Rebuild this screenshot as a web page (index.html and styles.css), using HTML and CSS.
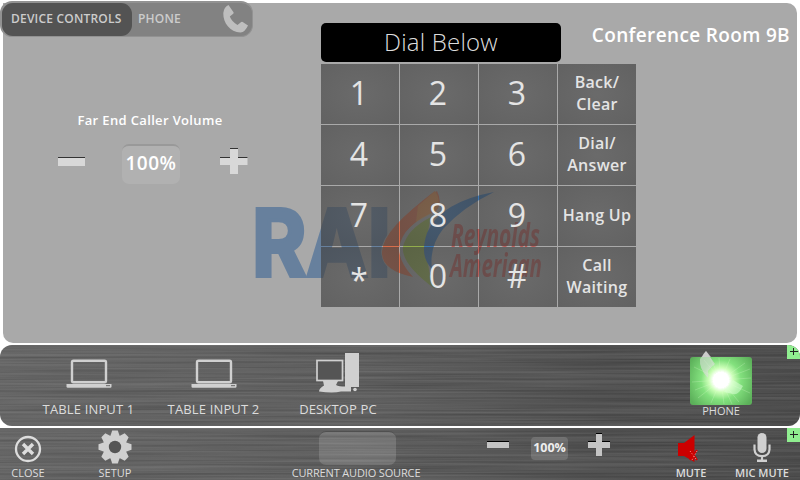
FILE: index.html
```html
<!DOCTYPE html>
<html lang="en">
<head>
<meta charset="utf-8">
<title>Conference Room 9B</title>
<link rel="stylesheet" href="styles.css">
</head>
<body>
<svg class="defs" width="0" height="0" aria-hidden="true">
  <defs>
    <filter id="brushed" x="0" y="0" width="100%" height="100%" color-interpolation-filters="sRGB">
      <feTurbulence type="fractalNoise" baseFrequency="0.004 0.42" numOctaves="3" seed="8"/>
      <feColorMatrix values="0.7 0 0 0 0.06  0.7 0 0 0 0.06  0.7 0 0 0 0.06  0 0 0 0 0.22"/>
    </filter>
    <symbol id="laptop" viewBox="0 0 46 30">
      <rect x="6" y="1.8" width="34" height="21.4" rx="1.5" fill="none" stroke="#d0d0d0" stroke-width="2.4"/>
      <path d="M.5 25h45v2.600q0 1.200-1.200 1.200H1.700Q.5 28.800.5 27.600z" fill="#d0d0d0"/>
      <path d="M40 26.700h4" stroke="#666" stroke-width="1"/>
    </symbol>
    <symbol id="handset" viewBox="0 0 26 28">
      <path d="M5.500 0 10.500 7.200Q11 8 10.200 8.700L6.800 11.500Q9 17 14.500 20L18.200 17.100Q19 16.500 19.700 17L25 20.600Q22 27.300 17.500 27.500C7 27 0 18 .3 8Q1 2 5.500 0z"/>
    </symbol>
  </defs>
</svg>

<main class="panel">
  <svg class="logo" viewBox="0 0 300 110" aria-hidden="true">
    <text class="logo-rai" x="-3" y="90" textLength="139" lengthAdjust="spacingAndGlyphs">RAI</text>
    <path fill="#e0643c" stroke="#a9a9a9" stroke-width="1.500" d="M180 4Q186 12 183 20Q139 51 139 66Q138 80 158 91Q128 86 127 66Q126 45 180 4z"/>
    <path fill="#e0643c" d="M182 5q6 12-1 20Q148 38 144 62 144 76 158 91 126 84 127 66 128 42 182 5z"/>
    <path fill="#e8a040" d="M180 5q7 10 1 20l-20 11 2-16z" opacity=".6"/>
    <path fill="#8fae3c" d="M176 31Q152 43 148 61Q146 78 180 103Q166 70 176 31z"/>
    <path fill="#2c70b8" d="M239 6Q185 16 172 47Q164 70 177 83Q174 61 188 43Q208 21 239 6z"/>
    <text class="logo-name" x="196" y="61" textLength="89" lengthAdjust="spacingAndGlyphs">Reynolds</text>
    <text class="logo-name" x="195" y="91" textLength="92" lengthAdjust="spacingAndGlyphs">American</text>
  </svg>
  <nav class="tabs">
    <span class="tab tab-active">DEVICE CONTROLS</span>
    <span class="tab">PHONE</span>
    <svg class="tab-icon" width="26" height="28"><use href="#handset"/></svg>
  </nav>
  <section class="volume">
    <h2>Far End Caller Volume</h2>
    <div class="volume-row">
      <svg width="28" height="28"><path d="M0 9h27v9H0z" fill="#d8d8d8"/><path d="M0 9.500h27" stroke="#333"/></svg>
      <output class="level">100%</output>
      <svg width="28" height="28"><path d="M0 9h10V0h8v9h9.500v8H18v9h-8v-9H0z" fill="#d8d8d8"/><path d="M0 9.500h10M10 .5h8M18 9.500h9.500" stroke="#333"/></svg>
    </div>
  </section>
  <section class="dialer">
    <header>
      <div class="display">Dial Below</div>
      <h1>Conference Room 9B</h1>
    </header>
    <div class="keypad">
      <span class="key">1</span><span class="key">2</span><span class="key">3</span><span class="key word">Back/<br>Clear</span>
      <span class="key">4</span><span class="key">5</span><span class="key">6</span><span class="key word">Dial/<br>Answer</span>
      <span class="key">7</span><span class="key">8</span><span class="key">9</span><span class="key word">Hang Up</span>
      <span class="key"><span class="star">*</span></span><span class="key">0</span><span class="key">#</span><span class="key word">Call<br>Waiting</span>
    </div>
  </section>
</main>

<section class="bar sources">
  <svg class="texture"><rect width="100%" height="100%" filter="url(#brushed)"/></svg>
  <div class="source source-1"><svg width="46" height="30"><use href="#laptop"/></svg><span>TABLE INPUT 1</span></div>
  <div class="source source-2"><svg width="46" height="30"><use href="#laptop"/></svg><span>TABLE INPUT 2</span></div>
  <div class="source source-pc">
    <svg width="44" height="40" viewBox="0 0 44 40">
      <path d="M29 0h14v34H29z" fill="#d0d0d0"/>
      <rect x="1" y="7.500" width="25.500" height="20" fill="#555" stroke="#d0d0d0" stroke-width="1.700"/>
      <path d="M7 28h15l-2 4q3 1.500 9 1.500h6v5H25q-8 2-22 0 0-3 5-6z" fill="#d0d0d0"/>
      <circle cx="39" cy="36.500" r="1.800" fill="#d0d0d0"/>
    </svg>
    <span>DESKTOP PC</span>
  </div>
  <div class="source source-phone">
    <svg width="62" height="54" viewBox="0 0 62 54">
      <defs><radialGradient id="glow" gradientUnits="userSpaceOnUse" cx="31" cy="29" r="36">
        <stop offset="0" stop-color="#fff"/><stop offset=".22" stop-color="#fff"/><stop offset=".34" stop-color="#ccffb8"/><stop offset=".55" stop-color="#83e17e"/><stop offset="1" stop-color="#5cb05a"/>
      </radialGradient></defs>
      <rect y="6" width="62" height="48" rx="3" fill="url(#glow)"/>
      <path d="M31 29 4 16M31 29 2 31M31 29 8 47M31 29 21 52M31 29 34 53M31 29 49 51M31 29 60 42M31 29 61 27M31 29 55 12M31 29 40 8M31 29 29 7M31 29 14 9M31 29 5 39M31 29 60 18M31 29 42 53M31 29 20 7" stroke="#dfffd2" stroke-width=".8" opacity=".3"/>
      <path d="M16 0 25 13Q21 16 18 20 19 28 17 26 9 17 10 8z" fill="#ddd" opacity=".6"/>
      <path d="M16 0l5 6h-9q1-3 4-6z" fill="#ddd" opacity=".7"/>
      <path d="M43 29l10 6q-5 10-10 8l-9-2z" fill="#dfffdc" opacity=".5"/>
      <circle cx="31" cy="29" r="8" fill="#fff"/>
    </svg>
    <span>PHONE</span>
  </div>
  <b class="badge"><i></i></b>
</section>

<footer class="bar controls">
  <svg class="texture"><rect width="100%" height="100%" filter="url(#brushed)"/></svg>
  <div class="control close"><svg width="28" height="28" viewBox="0 0 28 28" fill="none" stroke="#ddd"><circle cx="14" cy="14" r="12" stroke-width="2.300"/><path d="M9 9l10 10M19 9 9 19" stroke-width="3.400"/></svg><span>CLOSE</span></div>
  <div class="control setup">
    <svg width="34" height="34" viewBox="-17 -17 34 34"><g fill="#d0d0d0">
      <path id="tooth" d="M-5-10-2.800-16.500H2.800L5-10V10L2.800 16.500H-2.800L-5 10z"/><use href="#tooth" transform="rotate(45)"/><use href="#tooth" transform="rotate(90)"/><use href="#tooth" transform="rotate(135)"/><circle r="12"/></g><circle r="6.200" fill="#555"/></svg>
    <span>SETUP</span>
  </div>
  <div class="control audio"><div class="audio-box"></div><span>CURRENT AUDIO SOURCE</span></div>
  <div class="master">
    <svg width="22" height="23"><path d="M0 8h22v7H0z" fill="#c4c4c4"/><path d="M0 8.500h22" stroke="#000"/></svg>
    <output>100%</output>
    <svg width="22" height="23"><path d="M0 8h8V0h6v8h8v7h-8v8H8v-8H0z" fill="#c4c4c4"/><path d="M0 8.500h8M8 .5h6M14 8.500h8" stroke="#000"/></svg>
  </div>
  <div class="control mute">
    <svg width="22" height="28" viewBox="0 0 22 28"><path d="M1 8h6L17.500 0v27L7 21H1z" fill="#c00"/><path d="M14 16l6 9M20 15l-7 10" stroke="#c00" stroke-width="2"/><path d="M13 16l6 8M20 16l-5 9" stroke="#ff9a9a" stroke-dasharray="1 2" fill="none"/></svg>
    <span>MUTE</span>
  </div>
  <div class="control mic">
    <svg width="18" height="30" viewBox="0 0 18 30"><rect x="4.500" y="0" width="9" height="20" rx="4.500" fill="#d0d0d0"/><path d="M1.500 11.500v5Q2 23.200 9 23.200t7.500-6.700v-5M9 23v4.500" fill="none" stroke="#d0d0d0" stroke-width="2.200"/><path d="M4 26.500h10v2.500H4z" fill="#d0d0d0"/></svg>
    <span>MIC MUTE</span>
  </div>
  <b class="badge"><i></i></b>
</footer>
</body>
</html>
```
FILE: styles.css
```css
* { box-sizing: border-box; }
body {
  margin: 0;
  width: 800px;
  height: 480px;
  overflow: hidden;
  display: grid;
  grid-template-rows: 340px 81px 52px;
  gap: 2px;
  padding-top: 3px;
  background: #fff;
  color: #dcdcdc;
  font-family: "Open Sans", "Noto Sans", sans-serif;
}
svg { display: block; flex: none; }
.defs { position: absolute; }
h1, h2 { margin: 0; color: #fff; font-weight: 600; }

.panel {
  position: relative;
  display: flex;
  margin: 0 3px;
  border-radius: 0 10px 10px 10px;
  background: #a9a9a9;
}
.logo { position: absolute; left: 252px; top: 183px; width: 300px; height: 110px; opacity: .85; overflow: visible; }
.logo-rai { font: 700 92px Inter, "Open Sans", sans-serif; fill: #5c7a9c; stroke: #5c7a9c; stroke-width: 4px; }
.logo-name { font: italic 700 32px "Open Sans", sans-serif; fill: #bd504c; }

.tabs {
  position: absolute;
  left: -3px;
  top: -2px;
  width: 253px;
  height: 36px;
  display: flex;
  align-items: center;
  border-radius: 12px;
  border: 2px solid #929292;
  border-width: 2px 1px 1px 2px;
  background: #828282;
  font-size: 12px;
  font-weight: 600;
  letter-spacing: .2px;
  color: #ccc;
}
.tab { padding-left: 6px; line-height: 33px; margin-top: -2px; }
.tab-active { width: 130px; height: 33px; margin-top: 0; padding-left: 9px; border-radius: 11px; background: #535353; white-space: nowrap; line-height: 32px; }
.tab-icon { margin-left: auto; margin-right: 3px; margin-top: -2px; fill: #bebebe; }

.volume { width: 318px; padding: 108px 0 0 53px; }
.volume h2 { width: 188px; text-align: center; font-size: 13px; line-height: 18px; letter-spacing: .35px; }
.volume-row { display: flex; align-items: flex-start; padding: 15px 0 0 2px; }
.volume-row svg { margin-top: 4px; }
.level {
  width: 58px;
  height: 40px;
  margin: 0 40px 0 36px;
  border-radius: 7px;
  border-top: 2px solid #999;
  background: #b1b1b1;
  color: #fff;
  text-align: center;
  font-size: 19px;
  font-weight: 600;
  line-height: 34px;
  letter-spacing: .5px;
}

.dialer { position: relative; flex: 1; padding-top: 20px; }
.dialer header { display: flex; justify-content: space-between; height: 41px; padding-right: 7px; }
.display {
  width: 240px;
  height: 39px;
  border-radius: 5px;
  background: #000;
  color: #ddd;
  text-align: center;
  font-size: 24px;
  font-weight: 300;
  line-height: 38px;
  letter-spacing: .2px;
}
h1 { font-size: 19px; line-height: 24px; white-space: nowrap; letter-spacing: .35px; }
.keypad {
  width: 315px;
  display: grid;
  grid-template-columns: repeat(4, 78px);
  grid-auto-rows: 60px;
  gap: 1px;
}
.key {
  display: flex;
  align-items: center;
  justify-content: center;
  padding: 0 2px 4px 0;
  background: radial-gradient(ellipse at center, rgba(74, 74, 74, .66), rgba(64, 64, 64, .68));
  color: #e4e4e4;
  font-size: 32px;
}
.star { padding-top: 8px; }
.word { padding: 0 0 2px; text-align: center; font-size: 16px; font-weight: 600; line-height: 22px; letter-spacing: .3px; }

.bar { position: relative; overflow: hidden; background: linear-gradient(100deg, #666, #5c5c5c 45%, #4c4c4c 75%, #474747); }
.texture { position: absolute; inset: 0; width: 100%; height: 100%; }
.sources { display: flex; border-radius: 12px; }
.source { position: relative; display: flex; flex-direction: column; align-items: center; justify-content: flex-end; width: 124px; height: 73px; font-size: 13px; letter-spacing: .15px; line-height: 18px; white-space: nowrap; }
.source svg { margin-bottom: 11px; }
.source-1 { margin-left: 26px; }
.source-1, .source-2 { width: 125px; }
.source-pc svg { margin-bottom: 7px; }
.source-phone { margin-left: auto; width: 62px; margin-right: 48px; height: 75px; font-size: 11px; letter-spacing: 0; }
.source-phone svg { margin-bottom: -3px; }
.badge { position: absolute; top: 0; right: 0; width: 13px; height: 14px; background: #90ee90; }
.badge i { position: absolute; left: 3px; top: 6px; width: 8px; height: 1px; background: #222; }
.badge i::after { content: ""; position: absolute; left: 3px; top: -3px; width: 1px; height: 7px; background: #222; }

.controls { display: flex; }
.control { position: relative; display: flex; flex-direction: column; align-items: center; justify-content: flex-end; height: 52px; font-size: 11px; line-height: 15px; white-space: nowrap; }
.control svg { margin-bottom: 2px; }
.close { width: 56px; }
.setup { width: 60px; margin-left: 29px; }
.setup svg { margin-bottom: 1px; }
.audio { width: 140px; margin-left: 141px; letter-spacing: -.15px; }
.audio-box { width: 77px; height: 34px; margin-left: 3px; border-radius: 7px; background: rgba(255, 255, 255, .15); border-top: 1px solid #505050; }
.master { position: relative; display: flex; padding: 5px 0 0 61px; }
.master output { width: 37px; height: 23px; margin: 4px 20px 0 22px; border-radius: 4px; background: rgba(255, 255, 255, .15); text-align: center; font-size: 12.5px; font-weight: 700; line-height: 21px; color: #eee; }
.mute { width: 60px; margin-left: 51px; font-weight: 600; }
.mute svg { margin: 0 6px 2px 0; }
.mic { width: 70px; margin-left: 6px; font-weight: 600; }
.mic svg { margin-bottom: 2px; }
```
